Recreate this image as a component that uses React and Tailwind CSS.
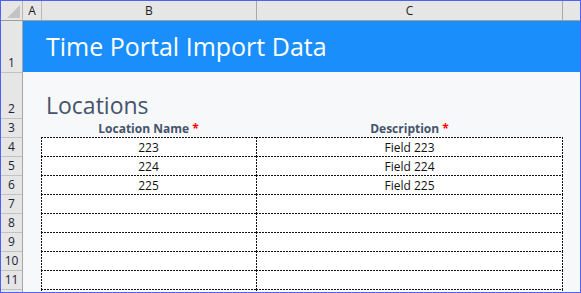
const locations = [
  { name: '223', desc: 'Field 223' },
  { name: '224', desc: 'Field 224' },
  { name: '225', desc: 'Field 225' },
  { name: '', desc: '' },
  { name: '', desc: '' },
  { name: '', desc: '' },
  { name: '', desc: '' },
  { name: '', desc: '' },
  { name: '', desc: '' },
]

const rowHeads = [
  { n: 1, h: 'h-[52px]' },
  { n: 2, h: 'h-[46px]' },
  { n: 3, h: 'h-[19px]' },
  ...[4, 5, 6, 7, 8, 9, 10, 11].map((n) => ({ n, h: 'h-[19px]' })),
  { n: '', h: 'h-[19px]' },
]

// dotted cell edges drawn with gradients (2px on, 1px off like excel's dashed border)
const dashB =
  'bg-white bg-no-repeat bg-[image:repeating-linear-gradient(90deg,#111_0_2px,transparent_2px_3px),repeating-linear-gradient(180deg,#111_0_2px,transparent_2px_3px)] bg-[length:100%_1px,1px_100%]'
const dashC =
  'bg-white bg-no-repeat bg-[image:repeating-linear-gradient(90deg,#111_0_2px,transparent_2px_3px),repeating-linear-gradient(180deg,#111_0_2px,transparent_2px_3px),repeating-linear-gradient(180deg,#111_0_2px,transparent_2px_3px)] bg-[length:100%_1px,1px_100%,1px_100%] bg-[position:0_0,0_0,100%_0]'

function ColHeader() {
  return (
    <div className="flex h-[20px] border-b border-[#9e9e9e] bg-[#e6e6e6] font-['Open_Sans',sans-serif] text-[12px] text-[#1e1e1e]">
      <div className="relative w-[22px] border-r border-[#b8b8b8]">
        <svg width="13" height="13" viewBox="0 0 13 13" className="absolute right-[2px] bottom-[2px]">
          <path d="M13 0 L13 13 L0 13 Z" fill="#c3c3c3" />
        </svg>
      </div>
      <div className="flex w-[19px] items-center justify-center border-r border-[#b8b8b8]">A</div>
      <div className="flex w-[215px] items-center justify-center border-r border-[#a8a8a8]">B</div>
      <div className="flex w-[306px] items-center justify-center border-r border-[#a8a8a8]">C</div>
      <div className="flex-1" />
    </div>
  )
}

function RowHeaders() {
  return (
    <div className="w-[22px] shrink-0 border-r border-[#a6a6a6] bg-[#e6e6e6] font-['Open_Sans',sans-serif] text-[12px] leading-none text-[#1c2433]">
      {rowHeads.map((r, i) => (
        <div key={i} className={`${r.h} flex items-end justify-center border-b border-[#c2c2c2] pb-[3px]`}>
          {r.n}
        </div>
      ))}
    </div>
  )
}

export default function App() {
  return (
    <div className="h-[293px] w-[581px] overflow-hidden border border-[#4d63f2] bg-[#f7f8fa]">
      <ColHeader />
      <div className="flex">
        <RowHeaders />
        <div className="flex-1 font-['Open_Sans',sans-serif]">
          <div className="flex h-[51px] items-center bg-[#1a8ffc] pl-[23px] text-[25px] text-white">
            Time Portal Import Data
          </div>
          <div className="flex h-[46px] items-end pb-[1px] pl-[23px] text-[23px] leading-none text-[#44546a]">
            Locations
          </div>
          <div className="flex h-[19px] items-end pb-[2px] text-[12px] font-bold leading-none text-[#44546a]">
            <div className="w-[18px]" />
            <div className="w-[215px] text-center">
              Location Name <span className="text-[#ff0000]">*</span>
            </div>
            <div className="w-[307px] text-center">
              Description <span className="text-[#ff0000]">*</span>
            </div>
          </div>
          {locations.map((loc, i) => (
            <div key={i} className="flex h-[19px] text-[12px] leading-none text-[#111]">
              <div className="w-[18px]" />
              <div className={`${dashB} flex w-[215px] items-center justify-center pt-[2px]`}>{loc.name}</div>
              <div className={`${dashC} flex w-[307px] items-center justify-center pt-[2px]`}>{loc.desc}</div>
            </div>
          ))}
        </div>
      </div>
    </div>
  )
}
